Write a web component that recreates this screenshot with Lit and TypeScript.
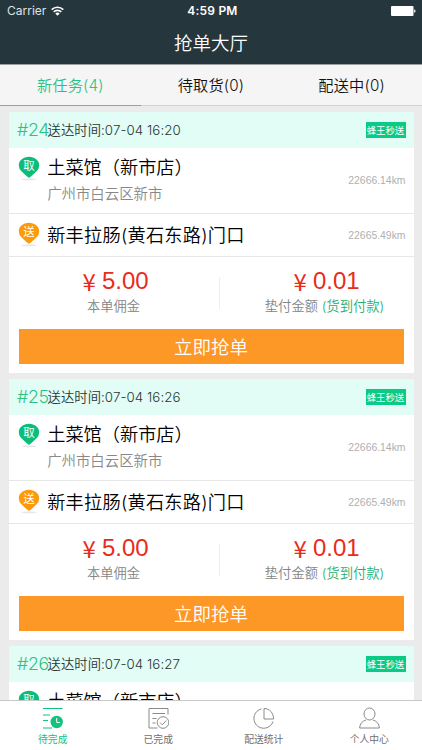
import { LitElement, html, css, svg } from "lit";
import { customElement, property } from "lit/decorators.js";

interface Order {
  id: number;
  time: string;
}

const orders: Order[] = [
  { id: 24, time: "07-04 16:20" },
  { id: 25, time: "07-04 16:26" },
  { id: 26, time: "07-04 16:27" },
];

@customElement("status-bar")
class StatusBar extends LitElement {
  static styles = css`
    :host { display: grid; grid-template-columns: 1fr auto 1fr; align-items: center; height: 22px; padding: 0 6px 0 7px; color: #fff; font: 400 12px/22px Inter, sans-serif; }
    .left { display: flex; align-items: center; gap: 5px; color: #dfe3e4; }
    .time { font-weight: 600; letter-spacing: 0.2px; padding-left: 2px; }
    .battery { justify-self: end; }
    svg { display: block; }
  `;
  render() {
    return html`
      <div class="left">
        <span>Carrier</span>
        <svg width="13" height="10" viewBox="0 0 13 10" fill="none" stroke="#fff" stroke-width="1.6">
          <path d="M.7 3.6a8.3 8.3 0 0 1 11.6 0M2.7 5.9a5.4 5.4 0 0 1 7.6 0" />
          <path d="M4.3 7.5a3.2 3.2 0 0 1 4.4 0L6.5 9.7z" fill="#fff" stroke="none" />
        </svg>
      </div>
      <div class="time">4:59 PM</div>
      <svg class="battery" width="25" height="10" viewBox="0 0 25 10" fill="#fff">
        <rect width="22.5" height="10" rx="1" />
        <path d="M23.2 3.2c1.8.5 1.8 3.1 0 3.6z" />
      </svg>
    `;
  }
}

@customElement("map-pin")
class MapPin extends LitElement {
  @property() label = "";
  @property() color = "";
  static styles = css`
    :host { display: block; width: 22px; height: 25px; }
    svg { display: block; }
    text { font: 400 11.5px "Noto Sans CJK SC", sans-serif; fill: #fff; }
  `;
  render() {
    return html`<svg width="22" height="25" viewBox="0 0 22 25">
      <ellipse cx="11" cy="23.4" rx="7.5" ry=".8" fill="#e6e6e6" />
      <path d="M11 21.8C9.5 21.2 5.500 17.200 3.400 15.300A9 9 0 0 1 .8 9.400C.8 4.300 5.300.800 11 .8s10.200 3.500 10.200 8.600a9 9 0 0 1-2.600 5.900C16.500 17.200 12.500 21.200 11 21.800z" fill=${this.color} />
      ${svg`<text x="11" y="14" text-anchor="middle">${this.label}</text>`}
    </svg>`;
  }
}

@customElement("order-card")
class OrderCard extends LitElement {
  @property({ attribute: false }) order!: Order;
  static styles = css`
    :host { display: block; height: 261px; background: #fff; font-family: Inter, "Noto Sans CJK SC", sans-serif; font-weight: 350; }
    .head { display: flex; align-items: center; height: 36px; padding: 0 8px 0 8.5px; background: #e1fdf5; }
    .id { width: 30.5px; font: 300 17.8px/36px Inter, sans-serif; color: #2dc184; white-space: nowrap; letter-spacing: -0.3px; }
    .sent { flex: 1; font-size: 13.3px; line-height: 20px; padding-bottom: 1px; letter-spacing: 0.08px; color: #2c3534; white-space: nowrap; }
    .tag { width: 40px; height: 16px; background: #0bca86; color: #fff; font: 400 9.4px/16px "Noto Sans CJK SC", sans-serif; text-align: center; white-space: nowrap; }
    .place { display: flex; box-sizing: border-box; padding: 0 8px 0 9.2px; border-bottom: 1px solid #e6e6e6; }
    .from { height: 66px; padding-top: 8px; }
    .to { height: 43px; padding-top: 8px; }
    .info { flex: 1; padding-left: 7.5px; white-space: nowrap; }
    .name { font-size: 18.2px; line-height: 22px; color: #000; }
    .to .name { padding-top: 2px; letter-spacing: 0.24px; }
    .address { padding-top: 6px; font-size: 14.4px; line-height: 20px; color: #888; }
    .km { align-self: center; font: 400 10.4px/14px "Liberation Sans", sans-serif; color: #b0b0b0; }
    .from .km { margin-top: -7px; }
    .to .km { margin-top: -7px; }
    .money { display: grid; grid-template-columns: 210px 1px 1fr; height: 71px; text-align: center; }
    .cell { padding-top: 10px; }
    .prepaid { padding-left: 16px; }
    .rule { height: 32px; background: #eee; margin-top: 20px; }
    .price { display: flex; justify-content: center; padding-left: 4px; font: 400 24px/28px "Liberation Sans", sans-serif; color: #e82c1c; }
    .yen { width: 19.5px; text-align: left; font: 400 24px/27px "Noto Sans CJK SC", sans-serif; }
    .caption { font-size: 13.3px; line-height: 22px; color: #858585; white-space: nowrap; }
    .cod { color: #27ae6e; }
    .grab { display: block; width: 385px; height: 35px; margin: 0.5px 0 0 10px; padding: 0; border: 0; background: #fd9827; color: #fff; font: 350 18.5px/35px "Noto Sans CJK SC", sans-serif; }
  `;
  render() {
    return html`
      <div class="head">
        <span class="id">#${this.order.id}</span>
        <span class="sent">送达时间:${this.order.time}</span>
        <span class="tag">蜂王秒送</span>
      </div>
      <div class="place from">
        <map-pin label="取" color="#0bbd79"></map-pin>
        <div class="info">
          <div class="name">土菜馆（新市店）</div>
          <div class="address">广州市白云区新市</div>
        </div>
        <span class="km">22666.14km</span>
      </div>
      <div class="place to">
        <map-pin label="送" color="#fd9a0b"></map-pin>
        <div class="info"><div class="name">新丰拉肠(黄石东路)门口</div></div>
        <span class="km">22665.49km</span>
      </div>
      <div class="money">
        <div class="cell">
          <div class="price"><span class="yen">¥</span>5.00</div>
          <div class="caption">本单佣金</div>
        </div>
        <div class="rule"></div>
        <div class="cell prepaid">
          <div class="price"><span class="yen">¥</span>0.01</div>
          <div class="caption">垫付金额 <span class="cod">(货到付款)</span></div>
        </div>
      </div>
      <button class="grab">立即抢单</button>
    `;
  }
}

const navItems = [
  {
    label: "待完成",
    icon: svg`<path d="M1 1.5h19.5M1 8h7M1 13.5h5M1 21h9" /><circle cx="14.7" cy="15" r="6.2" fill="currentColor" stroke="none" /><path d="M14.7 11v4.5h3.3" stroke="#fff" />`,
  },
  {
    label: "已完成",
    icon: svg`<path d="M20 7.5V1.5H1v19.5h8.5M4.5 6.5h12.5M4.5 11.5h4M4.5 16h3" /><circle cx="15" cy="15.5" r="5.8" /><path d="m12 15.5 2.3 2.3 4-4.3" />`,
  },
  {
    label: "配送统计",
    icon: svg`<path d="M8.5 1.9a9.8 9.8 0 1 0 11.5 12.7" /><path d="M11 1.5v10.5h9.6c0-6-4-10.5-9.6-10.5z" />`,
  },
  {
    label: "个人中心",
    icon: svg`<ellipse cx="10.5" cy="7" rx="5.5" ry="6" /><path d="M7 13c-3.5 1-6.2 3.7-6.4 8h19.8c-.2-4.3-2.9-7-6.4-8" />`,
  },
];

@customElement("bottom-nav")
class BottomNav extends LitElement {
  static styles = css`
    :host { display: grid; grid-template-columns: repeat(4, 1fr); box-sizing: border-box; height: 50px; border-top: 1px solid #c8c8c8; background: #fff; }
    .item { display: flex; flex-direction: column; align-items: center; padding-top: 6px; color: #8a8a8a; }
    .on { color: #13c27f; }
    svg { display: block; }
    .label { color: #707070; font: 400 9.8px/15px "Noto Sans CJK SC", sans-serif; padding-top: 2.5px; }
    .on .label { color: #13c27f; }
  `;
  render() {
    return navItems.map(
      (item, i) => html`<div class="item ${i === 0 ? "on" : ""}">
        <svg width="21" height="22" viewBox="0 0 21 22" fill="none" stroke="currentColor" stroke-width="1">${item.icon}</svg>
        <span class="label">${item.label}</span>
      </div>`
    );
  }
}

@customElement("app-root")
class AppRoot extends LitElement {
  static styles = css`
    :host { display: flex; flex-direction: column; height: 750px; overflow: hidden; background: #ebebeb; font-family: Inter, "Noto Sans CJK SC", sans-serif; }
    .top { height: 65px; flex: none; background: #26363d; border-bottom: 1px solid #9a9fa1; box-sizing: border-box; }
    .title { height: 42px; font: 350 18.5px/41px "Noto Sans CJK SC", sans-serif; color: #fff; text-align: center; }
    .tabs { display: grid; flex: none; grid-template-columns: repeat(3, 1fr); height: 41px; background: #f5f5f5; }
    .tab { box-sizing: border-box; height: 41px; border-bottom: 1px solid #d2d2d2; text-align: center; font-size: 15.2px; line-height: 42px; font-weight: 350; letter-spacing: 0.2px; color: #111; }
    .tab.active { color: #2bc184; border-bottom-color: #4fc79c; }
    .list { flex: 1; min-height: 0; overflow: hidden; display: flex; flex-direction: column; gap: 6px; padding: 6px 8.5px 0; }
    order-card { flex: none; }
    bottom-nav { flex: none; }
  `;
  render() {
    return html`
      <div class="top">
        <status-bar></status-bar>
        <div class="title">抢单大厅</div>
      </div>
      <div class="tabs">
        <div class="tab active">新任务(4)</div>
        <div class="tab">待取货(0)</div>
        <div class="tab">配送中(0)</div>
      </div>
      <div class="list">${orders.map((o) => html`<order-card .order=${o}></order-card>`)}</div>
      <bottom-nav></bottom-nav>
    `;
  }
}
